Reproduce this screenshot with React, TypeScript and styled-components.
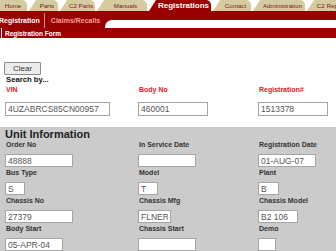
import styled, { createGlobalStyle } from 'styled-components';

const GlobalStyle = createGlobalStyle`
  html, body {
    margin: 0;
    padding: 0;
    background: #fff;
    overflow: hidden;
  }
  body {
    font-family: 'Liberation Sans', Arial, sans-serif;
  }
`;

const Page = styled.div`
  width: 336px;
  height: 251px;
  overflow: hidden;
  display: flex;
  flex-direction: column;
`;

const TabRow = styled.div`
  display: flex;
  gap: 2px;
  height: 11px;
  margin-left: -8px;
`;

const Tab = styled.div<{ $w: number; $active?: boolean }>`
  flex: none;
  box-sizing: border-box;
  width: ${(p) => p.$w}px;
  height: 11px;
  display: flex;
  align-items: center;
  justify-content: center;
  padding-left: 7px;
  background: ${(p) => (p.$active ? '#990000' : '#d4cba0')};
  color: ${(p) => (p.$active ? '#fff' : '#7b1818')};
  font-size: ${(p) => (p.$active ? '8px' : '6.2px')};
  font-weight: ${(p) => (p.$active ? 700 : 400)};
  border-top-right-radius: 5px;
  clip-path: polygon(0 100%, 7px 0, 100% 0, 100% 100%);
  white-space: nowrap;
  overflow: hidden;
`;

const SubNav = styled.div`
  display: flex;
  height: 17px;
  background: #990000;
`;

const SubItems = styled.div`
  display: flex;
  align-items: center;
  width: 105px;
  padding-top: 1px;
`;

const SubItem = styled.span<{ $active?: boolean }>`
  font-size: 7px;
  font-weight: 700;
  white-space: nowrap;
  color: ${(p) => (p.$active ? '#fff' : '#f4a09a')};
  padding: ${(p) => (p.$active ? '0 4px 0 0' : '0 0 0 6px')};
  margin-left: ${(p) => (p.$active ? '-1px' : '0')};
`;

const SubSep = styled.span`
  width: 1px;
  align-self: stretch;
  margin-top: 1px;
  background: #d09090;
`;

const SubFiller = styled.div`
  flex: 1;
  align-self: flex-end;
  height: 8px;
  background: #fff;
  border-top-left-radius: 7px;
`;

const FormHeader = styled.div`
  height: 10px;
  background: #990000;
  color: #fff;
  font-size: 6.5px;
  font-weight: 700;
  line-height: 12px;
  padding-left: 5px;
  box-shadow: inset 1px 0 #990000, inset 2px 0 #fff;
`;

const SearchArea = styled.div`
  box-sizing: border-box;
  height: 89px;
  padding: 24px 0 0 4px;
`;

const ClearButton = styled.button`
  display: block;
  width: 37px;
  height: 13px;
  padding: 0;
  background: #ececec;
  border: 1px solid #8a8a8a;
  border-radius: 1px;
  font-family: 'Liberation Sans', Arial, sans-serif;
  font-size: 8px;
  color: #333;
`;

const SearchTitle = styled.div`
  font-size: 7.7px;
  font-weight: 700;
  line-height: 10px;
  color: #111;
  padding-left: 2px;
`;

const FieldGrid = styled.div`
  display: grid;
  grid-template-columns: 133px 120px 1fr;
  padding-left: 1px;
`;

const Field = styled.div`
  display: flex;
  flex-direction: column;
  align-items: flex-start;
`;

const Label = styled.div<{ $red?: boolean; $gap: number }>`
  font-size: 7px;
  font-weight: 700;
  line-height: 9px;
  height: 9px;
  padding-left: 1px;
  margin-bottom: ${(p) => p.$gap}px;
  color: ${(p) => (p.$red ? '#e8141b' : '#333')};
  white-space: nowrap;
`;

const TextBox = styled.input<{ $w: number; $h: number }>`
  box-sizing: border-box;
  width: ${(p) => p.$w}px;
  height: ${(p) => p.$h}px;
  margin: 0;
  padding: 0 2px;
  border: 1px solid #a5a5a5;
  background: #fff;
  font-family: 'Liberation Sans', Arial, sans-serif;
  font-size: 8.5px;
  color: #555;
  outline: none;
`;

const UnitSection = styled.div`
  flex: 1;
  background: #cbcbcb;
  padding: 2px 0 0 4px;
`;

const SectionTitle = styled.div`
  font-size: 11px;
  font-weight: 700;
  line-height: 11px;
  color: #222;
  padding-left: 1px;
`;

const UnitGrid = styled(FieldGrid)`
  row-gap: 1px;
`;

const tabs = [
  { label: 'Home', w: 35 },
  { label: 'Parts', w: 29 },
  { label: 'C2 Parts', w: 35 },
  { label: 'Manuals', w: 50 },
  { label: 'Registrations', w: 62, active: true },
  { label: 'Contact', w: 38 },
  { label: 'Administration', w: 52 },
  { label: 'C2 Reports', w: 44 },
];

const searchFields = [
  { label: 'VIN', value: '4UZABRCS85CN00957', w: 105 },
  { label: 'Body No', value: '460001', w: 70 },
  { label: 'Registration#', value: '1513378', w: 70 },
];

const unitFields = [
  { label: 'Order No', value: '48888', w: 68 },
  { label: 'In Service Date', value: '', w: 58 },
  { label: 'Registration Date', value: '01-AUG-07', w: 58 },
  { label: 'Bus Type', value: 'S', w: 20 },
  { label: 'Model', value: 'T', w: 20 },
  { label: 'Plant', value: 'B', w: 21 },
  { label: 'Chassis No', value: '27379', w: 68 },
  { label: 'Chassis Mfg', value: 'FLNER', w: 33 },
  { label: 'Chassis Model', value: 'B2 106', w: 40 },
  { label: 'Body Start', value: '05-APR-04', w: 58 },
  { label: 'Chassis Start', value: '', w: 58 },
  { label: 'Demo', value: '', w: 18 },
];

const App = () => {
  return (
    <Page>
      <GlobalStyle />
      <TabRow>
        {tabs.map((t) => (
          <Tab key={t.label} $w={t.w} $active={t.active}>
            {t.label}
          </Tab>
        ))}
      </TabRow>
      <SubNav>
        <SubItems>
          <SubItem $active>Registration</SubItem>
          <SubSep />
          <SubItem>Claims/Recalls</SubItem>
        </SubItems>
        <SubFiller />
      </SubNav>
      <FormHeader>Registration Form</FormHeader>

      <SearchArea>
        <ClearButton type="button">Clear</ClearButton>
        <SearchTitle>Search by...</SearchTitle>
        <FieldGrid>
          {searchFields.map((f) => (
            <Field key={f.label}>
              <Label $red $gap={8}>
                {f.label}
              </Label>
              <TextBox $w={f.w} $h={14} value={f.value} readOnly />
            </Field>
          ))}
        </FieldGrid>
      </SearchArea>

      <UnitSection>
        <SectionTitle>Unit Information</SectionTitle>
        <UnitGrid>
          {unitFields.map((f) => (
            <Field key={f.label}>
              <Label $gap={5}>{f.label}</Label>
              <TextBox $w={f.w} $h={13} value={f.value} readOnly />
            </Field>
          ))}
        </UnitGrid>
      </UnitSection>
    </Page>
  );
};

export default App;
